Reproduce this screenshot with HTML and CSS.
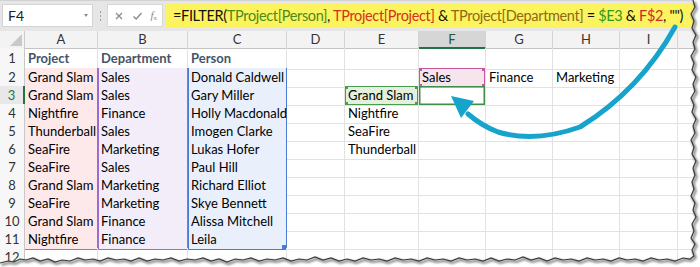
FILE: index.html
```html
<!DOCTYPE html>
<html>
<head>
<meta charset="utf-8">
<link rel="stylesheet" href="styles.css">
</head>
<body>
<div class="app">
  <div class="fbar">
    <div class="namebox"><span class="nb-text">F4</span><span class="dd"></span></div>
    <div class="grip"><i></i><i></i><i></i></div>
    <div class="btns">
      <svg class="ico" width="10" height="10" viewBox="0 0 10 10"><path d="M2 2 L8 8 M8 2 L2 8" stroke="#8a8a8a" stroke-width="1.2" fill="none"/></svg>
      <svg class="ico" width="11" height="10" viewBox="0 0 11 10"><path d="M1.5 5.5 L4.2 8 L9.5 2" stroke="#8a8a8a" stroke-width="1.3" fill="none"/></svg>
      <span class="fx"><i>f</i><sub>x</sub></span>
    </div>
    <div class="formula">=FILTER(<span class="f-person">TProject[Person]</span>, <span class="f-project">TProject[Project]</span> &amp; <span class="f-dept">TProject[Department]</span> = <span class="f-e3">$E3</span> &amp; <span class="f-f2">F$2</span>, "")</div>
  </div>

  <div class="sheet">
    <div class="row hdr">
      <div class="corner"><svg width="14" height="14" viewBox="0 0 14 14"><path d="M13 1 L13 13 L1 13 Z" fill="#c9c9c9"/></svg></div>
      <div class="ch">A</div><div class="ch">B</div><div class="ch">C</div><div class="ch">D</div><div class="ch">E</div><div class="ch sel">F</div><div class="ch">G</div><div class="ch">H</div><div class="ch">I</div><div class="ch last"></div>
    </div>
    <div class="row r1">
      <div class="rh">1</div>
      <div class="c th a-top">Project</div><div class="c th b-top">Department</div><div class="c th c-top">Person</div><div class="c"></div><div class="c"></div><div class="c"></div><div class="c"></div><div class="c"></div><div class="c"></div><div class="c"></div>
    </div>
    <div class="row">
      <div class="rh">2</div>
      <div class="c ra">Grand Slam</div><div class="c rb">Sales</div><div class="c rc">Donald Caldwell</div><div class="c"></div><div class="c"></div><div class="c ref-f2">Sales</div><div class="c">Finance</div><div class="c">Marketing</div><div class="c"></div><div class="c"></div>
    </div>
    <div class="row">
      <div class="rh act">3</div>
      <div class="c ra">Grand Slam</div><div class="c rb">Sales</div><div class="c rc">Gary Miller</div><div class="c"></div><div class="c ref-e3">Grand Slam</div><div class="c active"></div><div class="c"></div><div class="c"></div><div class="c"></div><div class="c"></div>
    </div>
    <div class="row">
      <div class="rh">4</div>
      <div class="c ra">Nightfire</div><div class="c rb">Finance</div><div class="c rc">Holly Macdonald</div><div class="c"></div><div class="c">Nightfire</div><div class="c"></div><div class="c"></div><div class="c"></div><div class="c"></div><div class="c"></div>
    </div>
    <div class="row">
      <div class="rh">5</div>
      <div class="c ra">Thunderball</div><div class="c rb">Sales</div><div class="c rc">Imogen Clarke</div><div class="c"></div><div class="c">SeaFire</div><div class="c"></div><div class="c"></div><div class="c"></div><div class="c"></div><div class="c"></div>
    </div>
    <div class="row">
      <div class="rh">6</div>
      <div class="c ra">SeaFire</div><div class="c rb">Marketing</div><div class="c rc">Lukas Hofer</div><div class="c"></div><div class="c">Thunderball</div><div class="c"></div><div class="c"></div><div class="c"></div><div class="c"></div><div class="c"></div>
    </div>
    <div class="row">
      <div class="rh">7</div>
      <div class="c ra">SeaFire</div><div class="c rb">Sales</div><div class="c rc">Paul Hill</div><div class="c"></div><div class="c"></div><div class="c"></div><div class="c"></div><div class="c"></div><div class="c"></div><div class="c"></div>
    </div>
    <div class="row">
      <div class="rh">8</div>
      <div class="c ra">Grand Slam</div><div class="c rb">Marketing</div><div class="c rc">Richard Elliot</div><div class="c"></div><div class="c"></div><div class="c"></div><div class="c"></div><div class="c"></div><div class="c"></div><div class="c"></div>
    </div>
    <div class="row">
      <div class="rh">9</div>
      <div class="c ra">SeaFire</div><div class="c rb">Marketing</div><div class="c rc">Skye Bennett</div><div class="c"></div><div class="c"></div><div class="c"></div><div class="c"></div><div class="c"></div><div class="c"></div><div class="c"></div>
    </div>
    <div class="row">
      <div class="rh">10</div>
      <div class="c ra">Grand Slam</div><div class="c rb">Finance</div><div class="c rc">Alissa Mitchell</div><div class="c"></div><div class="c"></div><div class="c"></div><div class="c"></div><div class="c"></div><div class="c"></div><div class="c"></div>
    </div>
    <div class="row">
      <div class="rh">11</div>
      <div class="c ra a-bot">Nightfire</div><div class="c rb b-bot">Finance</div><div class="c rc c-bot">Leila</div><div class="c"></div><div class="c"></div><div class="c"></div><div class="c"></div><div class="c"></div><div class="c"></div><div class="c"></div>
    </div>
    <div class="row">
      <div class="rh">12</div>
      <div class="c"></div><div class="c"></div><div class="c"></div><div class="c"></div><div class="c"></div><div class="c"></div><div class="c"></div><div class="c"></div><div class="c"></div><div class="c"></div>
    </div>
  </div>

  <svg class="overlay" width="700" height="267" viewBox="0 0 700 267">
    <defs>
      <filter id="blur" x="-5%" y="-5%" width="110%" height="110%"><feGaussianBlur stdDeviation="1.2"/></filter>
    </defs>
    <path d="M675,27 Q640,90 580,127 Q535,143 498,132 Q482,126 468,114" fill="none" stroke="#16a3cc" stroke-width="5" stroke-linecap="round"/>
    <polygon points="451,96 474,101 461,118" fill="#16a3cc"/>
    <polygon fill="#ffffff" points="0,263 8,261 14,262 20,259 26,260 33,258 40,261 48,259 55,262 62,260 70,261 78,258 85,260 93,259 100,261 108,258 116,260 124,259 131,261 139,258 147,261 155,259 163,260 171,258 179,261 187,259 195,260 203,258 211,261 219,259 227,262 235,259 243,260 251,258 259,261 267,259 275,260 283,258 291,261 299,259 307,260 315,257 323,260 331,258 339,261 347,259 355,261 363,258 371,260 379,259 387,261 395,258 403,260 411,259 419,261 427,258 435,260 443,259 451,261 459,258 467,260 475,259 483,261 491,258 499,261 507,259 515,260 523,257 531,260 539,258 547,261 555,258 563,260 571,259 579,261 587,258 595,260 603,259 611,261 619,258 627,260 635,259 643,261 651,258 659,260 667,259 675,261 683,258 690,259 694,256 692,250 695,244 691,238 694,231 692,224 696,217 693,210 695,203 691,196 694,189 692,182 695,175 693,168 696,161 692,154 694,147 691,140 695,133 693,126 696,119 692,112 694,105 691,98 695,91 693,84 696,77 692,70 694,63 691,56 695,49 693,42 696,35 692,28 694,21 691,14 695,7 693,0 700,0 700,267 0,267"/>
    <polyline fill="none" stroke="#8a8a8a" stroke-width="2.5" filter="url(#blur)" transform="translate(1.5,1.8)" points="0,263 8,261 14,262 20,259 26,260 33,258 40,261 48,259 55,262 62,260 70,261 78,258 85,260 93,259 100,261 108,258 116,260 124,259 131,261 139,258 147,261 155,259 163,260 171,258 179,261 187,259 195,260 203,258 211,261 219,259 227,262 235,259 243,260 251,258 259,261 267,259 275,260 283,258 291,261 299,259 307,260 315,257 323,260 331,258 339,261 347,259 355,261 363,258 371,260 379,259 387,261 395,258 403,260 411,259 419,261 427,258 435,260 443,259 451,261 459,258 467,260 475,259 483,261 491,258 499,261 507,259 515,260 523,257 531,260 539,258 547,261 555,258 563,260 571,259 579,261 587,258 595,260 603,259 611,261 619,258 627,260 635,259 643,261 651,258 659,260 667,259 675,261 683,258 690,259 694,256 692,250 695,244 691,238 694,231 692,224 696,217 693,210 695,203 691,196 694,189 692,182 695,175 693,168 696,161 692,154 694,147 691,140 695,133 693,126 696,119 692,112 694,105 691,98 695,91 693,84 696,77 692,70 694,63 691,56 695,49 693,42 696,35 692,28 694,21 691,14 695,7 693,0"/>
    <polyline fill="none" stroke="#3a3a3a" stroke-width="1.2" points="0,263 8,261 14,262 20,259 26,260 33,258 40,261 48,259 55,262 62,260 70,261 78,258 85,260 93,259 100,261 108,258 116,260 124,259 131,261 139,258 147,261 155,259 163,260 171,258 179,261 187,259 195,260 203,258 211,261 219,259 227,262 235,259 243,260 251,258 259,261 267,259 275,260 283,258 291,261 299,259 307,260 315,257 323,260 331,258 339,261 347,259 355,261 363,258 371,260 379,259 387,261 395,258 403,260 411,259 419,261 427,258 435,260 443,259 451,261 459,258 467,260 475,259 483,261 491,258 499,261 507,259 515,260 523,257 531,260 539,258 547,261 555,258 563,260 571,259 579,261 587,258 595,260 603,259 611,261 619,258 627,260 635,259 643,261 651,258 659,260 667,259 675,261 683,258 690,259 694,256 692,250 695,244 691,238 694,231 692,224 696,217 693,210 695,203 691,196 694,189 692,182 695,175 693,168 696,161 692,154 694,147 691,140 695,133 693,126 696,119 692,112 694,105 691,98 695,91 693,84 696,77 692,70 694,63 691,56 695,49 693,42 696,35 692,28 694,21 691,14 695,7 693,0"/>
  </svg>
</div>
</body>
</html>
```

FILE: styles.css
```css
* { box-sizing: border-box; }
html, body { margin: 0; padding: 0; background: #fff; }
body { font-family: Lato, "Liberation Sans", sans-serif; color: #000; }

.app { position: relative; width: 700px; height: 267px; overflow: hidden; }

/* formula bar */
.fbar { height: 31px; background: #e6e6e6; border-top: 1px solid #d2d2d2; display: flex; align-items: flex-start; padding-top: 3px; padding-left: 2px; }
.namebox { flex: 0 0 91px; height: 23px; background: #fff; border: 1px solid #d4d4d4; display: flex; align-items: center; justify-content: space-between; padding: 0 4px 0 5px; }
.nb-text { font-size: 14px; color: #222; }
.dd { width: 0; height: 0; border-left: 2.5px solid transparent; border-right: 2.5px solid transparent; border-top: 3px solid #8a8a8a; }
.grip { flex: 0 0 14px; height: 23px; display: flex; flex-direction: column; align-items: center; justify-content: center; gap: 2px; }
.grip i { display: block; width: 1px; height: 2px; background: #a0a0a0; }
.btns { flex: 0 0 56px; height: 23px; background: #fff; border: 1px solid #d8d8d8; display: flex; align-items: center; justify-content: space-between; padding: 0 5px 0 6px; }
.ico { display: block; }
.fx { font-family: "Liberation Serif", serif; font-size: 11px; color: #8a8a8a; line-height: 1; }
.fx i { font-style: italic; }
.fx sub { font-size: 7px; vertical-align: -1px; }
.formula { margin-left: 2px; flex: 1 1 auto; min-width: 0; overflow: hidden; height: 23px; background: #fcf45f; padding-left: 8px; font-size: 14.5px; letter-spacing: -0.35px; line-height: 23px; white-space: nowrap; color: #111; }
.f-person { color: #4c8a1c; }
.f-project { color: #d4301f; }
.f-dept { color: #8c6a16; }
.f-e3 { color: #2f9a22; }
.f-f2 { color: #cf2a2a; }

/* sheet */
.row { display: grid; grid-template-columns: 25px 73px 90px 99px 58px 74px 67px 67px 67px 58px 22px; height: 18px; }
.row.hdr { height: 17px; background: #f3f3f3; }
.row.r1 { height: 20px; }

.corner { border-right: 1px solid #cdcdcd; border-bottom: 1px solid #c4c4c4; display: flex; align-items: flex-end; justify-content: flex-end; padding: 0 1px 1px 0; background: #f3f3f3; }
.ch { border-right: 1px solid #d4d4d4; border-bottom: 1px solid #c4c4c4; text-align: center; font-size: 13px; line-height: 16px; color: #333; }
.ch.sel { background: #d6d6d6; border-bottom: 2px solid #217346; color: #1f5a37; }
.ch.last { border-right: none; }

.rh { background: #f7f7f7; border-right: 1px solid #c9c9c9; border-bottom: 1px solid #dedede; text-align: center; font-size: 13px; line-height: 18px; color: #333; }
.r1 .rh { line-height: 20px; }
.rh.act { color: #217346; border-right: 2px solid #217346; background: #e8e8e8; }

.c { border-right: 1px solid #e2e2e2; border-bottom: 1px solid #e2e2e2; padding-left: 3px; font-size: 13px; line-height: 19px; white-space: nowrap; overflow: visible; }
.r1 .c { line-height: 21px; }
.c.th { font-weight: 700; color: #44546a; }

/* highlighted table columns */
.ra { background: #fde9e9; border-right-color: #9b6cd4; }
.rb { background: #f2edf9; border-right-color: #9b6cd4; box-shadow: inset 1px 0 0 #9b6cd4; }
.rc { background: #e9f0fb; border-right-color: #4a7cd6; box-shadow: inset 1px 0 0 #4a7cd6; }
.a-top { border-bottom-color: #e06666; }
.b-top { border-bottom-color: #9b6cd4; }
.c-top { border-bottom-color: #4a7cd6; }
.a-bot { border-bottom-color: #e06666; }
.b-bot { border-bottom-color: #9b6cd4; }
.c-bot { border-bottom-color: #4a7cd6; background-image: linear-gradient(#4a7cd6, #4a7cd6); background-size: 4px 4px; background-position: right 0 bottom 0; background-repeat: no-repeat; }

/* references and active cell */
.ref-e3 { background-color: #e3f0db; box-shadow: inset 0 0 0 1px #4e9a4e;
  background-image: linear-gradient(#4e9a4e,#4e9a4e), linear-gradient(#4e9a4e,#4e9a4e), linear-gradient(#4e9a4e,#4e9a4e), linear-gradient(#4e9a4e,#4e9a4e);
  background-size: 3px 3px; background-repeat: no-repeat; background-position: left top, right top, left bottom, right bottom; }
.ref-f2 { background-color: #f7e5ee; box-shadow: inset 0 0 0 1px #c9589a;
  background-image: linear-gradient(#c9589a,#c9589a), linear-gradient(#c9589a,#c9589a), linear-gradient(#c9589a,#c9589a), linear-gradient(#c9589a,#c9589a);
  background-size: 3px 3px; background-repeat: no-repeat; background-position: left top, right top, left bottom, right bottom; }
.active { box-shadow: inset 0 0 0 1.5px #3f8f4a; }

.overlay { position: absolute; left: 0; top: 0; pointer-events: none; }
```
